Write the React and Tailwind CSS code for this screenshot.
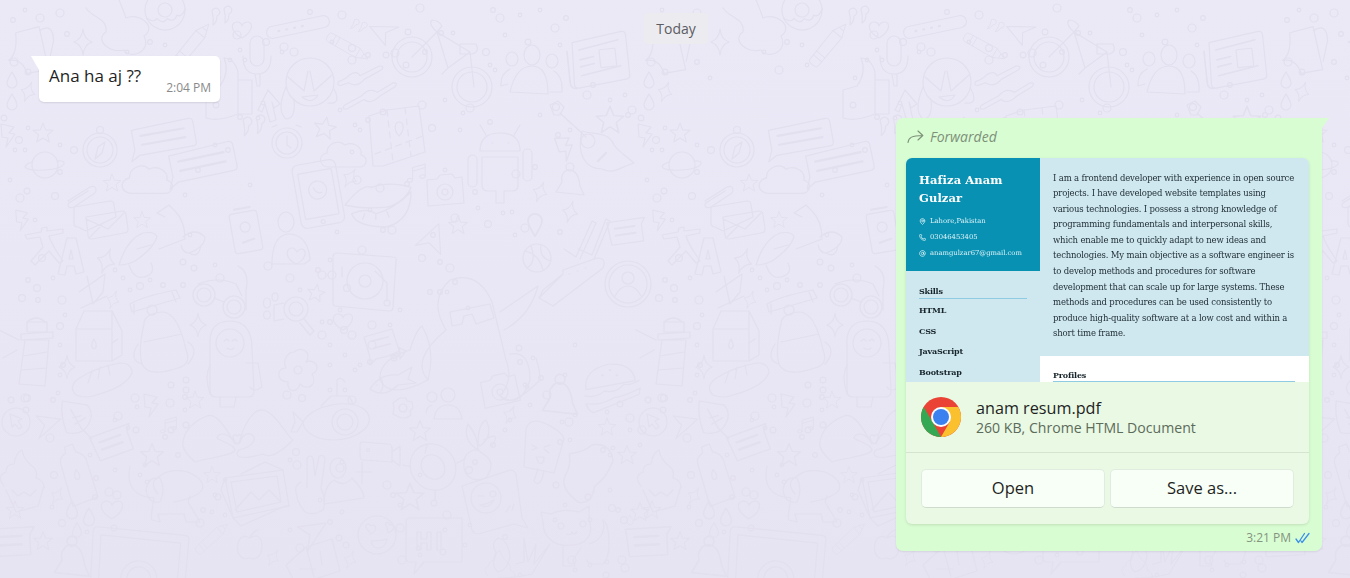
import { MapPin, Phone, AtSign } from "lucide-react";

// wallpaper doodles, local coords around 0,0
const shapes = {
  star: <path d="M0-11 3-3.5 11-3 5 2 7 10 0 5.5-7 10-5 2-11-3-3-3.5Z" />,
  spark: <path d="M0-13Q1-3 9 0 1 3 0 13-1 3-9 0-1-3 0-13Z" />,
  heart: <path d="M0 8C-13 1-11-8-5-8-2-8 0-6 0-4 0-6 3-8 6-8 11-8 12 1 0 8Z" />,
  drop: <path d="M0-8C3-3 5 0 5 3A5 5 0 0 1-5 3C-5 0-3-3 0-8Z" />,
  bolt: <path d="M-7-11 6-8 1-2 7-1-2 12 0 3-6 2Z" />,
  chat: (
    <>
      <path d="M-30-12 28-14Q32-14 32-10L32 10Q32 14 28 14L-26 14-35 19-30 8Z" />
      <path d="M-22-5H22M-22 4H22" strokeWidth="2.2" />
    </>
  ),
  note: (
    <>
      <path d="M-19-10H19L15-4V13H-17Z" />
      <path d="M-12-3H8M-12 4H8" strokeWidth="2" />
    </>
  ),
  pencil: (
    <>
      <path d="M-30-6Q-34-6-34-2V3Q-34 7-30 7H14L30 0 14-7Z" />
      <path d="M-24-6V7M-18-6V7M14-7V7M22-3V3" />
    </>
  ),
  mug: (
    <>
      <path d="M-14-20 10-22 12 22-10 22Q-12 6-26 6-16 2-14-20Z" />
      <path d="M10-18Q24-24 22-6L14 14" />
    </>
  ),
  cloud: <path d="M-14 14C-24 14-26 2-16 0-16-10-4-14 2-8 10-12 20-6 18 2 26 4 24 14 16 14Z" />,
  bigCloud: (
    <path d="M-32-18C-26-8-10-8-12 6-24 14-8 28 6 24 12 34 34 26 26 10 40 0 20-14 8-8 4-20-2-32-4-40" />
  ),
  donut: (
    <>
      <circle r="20" />
      <circle r="7" />
      <path d="M-20 3Q-14 10-10 6-6 14 0 9 6 15 10 8 14 12 20 4" />
    </>
  ),
  quote: <path d="M-8-7A4 4 0 1 1-3-2Q-3 4-7 7-6 0-8-7ZM4-9A4 4 0 1 1 9-4Q9 3 5 5 6-2 4-9Z" />,
  belt: (
    <>
      <rect x="-32" y="-6" width="64" height="12" rx="6" />
      <path d="M-20 0H-19M-12 0H-11M-4 0H-3M4 0H5" strokeWidth="2.2" />
    </>
  ),
  nav: <path d="M-15-7 15 0 0 3-3 16Z" />,
  navUp: <path d="M12-18 14 16 1 3-14 6Z" />,
  mic: (
    <>
      <rect x="-7" y="-22" width="14" height="30" rx="7" />
      <path d="M-14-2Q-14 16 0 16 14 16 14-2M-2 16 0 28H3L3 16" />
    </>
  ),
  face: (
    <>
      <circle cx="0" cy="-3" r="24" />
      <path d="M-24 2Q-34 26-24 34-14 34-16 14M24 4Q32 20 18 18M-22-8-6 6-2-14M22-10 4 6 0-14M-8 12Q2 20 8 10Z" />
    </>
  ),
  thumb: (
    <path d="M-22 26V-2L-8-6Q2-20-4-34 6-34 10-20L10-12H24V22H10Q-10 30-22 26ZM10-12V22" />
  ),
  arrowUp: <path d="M-12 6-2-14 10 0 4 4 2-2 6 16 0 18-5 0-8 8Z" />,
  sliders: (
    <>
      <path d="M-30-8Q-22-10-18-14-10-18-8-12L12-20Q18-20 14-16L-4-8Q-12 0-20-6L-28-4Q-32-4-30-8Z" />
      <path d="M-26 16-8 8Q0 0 8 6L24-2Q30-2 26 2L10 10Q0 18-6 12L-24 20Q-30 20-26 16Z" />
    </>
  ),
  bike: (
    <>
      <circle cx="-30" cy="-5" r="20" />
      <circle cx="-30" cy="-5" r="15" />
      <circle cx="30" cy="25" r="20" />
      <circle cx="30" cy="25" r="15" />
      <path d="M-30-5-5-30 28-10 32 25M-5-30Q-14-38-10-42-4-42 0-36L-5-30ZM-5-30 6 6 28-10M6 6 0 12M18-18H34Q38-10 30-8H18Z" />
    </>
  ),
  people: (
    <>
      <ellipse cx="0" cy="-17" rx="8" ry="10" />
      <path d="M-22 20Q-16-6 0-6 16-6 16 22Z" />
      <ellipse cx="-20" cy="-13" rx="6" ry="7" />
      <ellipse cx="20" cy="-11" rx="6" ry="7" />
      <path d="M-22-3Q-32 2-31 14L-24 12M22-1Q31 4 30 20L18 20" />
    </>
  ),
  paper: (
    <>
      <path d="M-24-20 26-26Q30-26 30-22L30 18Q30 22 26 22L-22 26Q-26 26-26 22Z" />
      <path d="M-30-12V20Q-30 26-24 26M-18-12 22-18M-18 14 22 8M-18-2-4-4M-18 5-4 3" strokeWidth="1.6" />
      <rect x="2" y="-10" width="16" height="18" rx="1" />
    </>
  ),
  map: (
    <>
      <path d="M-26-16-8-22 24-26 30 20-12 34-22 34Z" />
      <path d="M-8-22-2 30M10-24 16 24M-20 22 28 4" strokeDasharray="6 5" />
      <path d="M4 4C-2-2 0-10 4-10 9-10 10-2 4 4Z" />
    </>
  ),
  clock: (
    <>
      <circle r="15" />
      <circle r="11" />
      <path d="M0-7V2L4 5M-15-16-10-18M14-16 9-18" />
    </>
  ),
  compass: (
    <>
      <circle r="17" />
      <circle r="13" />
      <circle cy="-20" r="3.5" />
      <path d="M5-8 2 3-5 9-2-3Z" />
    </>
  ),
  planet: (
    <>
      <circle r="13" />
      <path d="M-13-3Q-22 0-19 3-14 6 0 5 16 4 19-1 20-5 12-4" />
    </>
  ),
  clip: <path d="M-14 8 8-6Q14-8 14-3 14 0 10 2L-8 14Q-14 16-14 12-14 10-10 8L6-2" />,
  phone: (
    <>
      <rect x="-22" y="-30" width="44" height="64" rx="6" />
      <rect x="-17" y="-21" width="34" height="46" rx="1" />
      <circle cy="-2" r="9" />
      <circle cy="30" r="2" />
      <path d="M-4-5Q-2 2 4 1" />
    </>
  ),
  android: (
    <>
      <path d="M-20-4Q-20-22 0-22 20-22 20-4Z" />
      <path d="M-14-20-20-30M14-20 20-30M-8-12H-7M8-12H9" />
      <path d="M-18 2H18V30Q18 36 12 36H4V48H-4V36H-12Q-18 36-18 30Z" />
      <rect x="-32" y="0" width="9" height="32" rx="4.5" />
      <rect x="23" y="-6" width="9" height="32" rx="4.5" />
    </>
  ),
  guitar: (
    <>
      <path d="M-40-40-32-44-26-38-30-30-36-30ZM-30-32-4-8" />
      <path d="M-8-14C4-10 18-14 24 0 30 8 40 14 44 18 30 22 24 30 12 24-4 24-14 10-8-14Z" />
      <circle cx="-2" cy="-4" r="7" />
      <path d="M8 16 16 8" strokeWidth="2.4" />
    </>
  ),
  bell: (
    <>
      <path d="M-3-12Q8-14 10 4L14 13-14 10-8 0Q-10-8-3-12Z" />
      <circle cy="-15" r="4" />
    </>
  ),
  camera: (
    <>
      <path d="M-18-12-8-13-5-17 7-18 10-14 17-15 19 11-17 14Z" />
      <circle cy="0" r="8" />
      <circle cy="0" r="3" />
    </>
  ),
  music: <path d="M-6 8V-6L8-10V4M-6 8A3 2 0 1 1-12 8 3 2 0 1 1-6 8ZM8 4A3 2 0 1 1 2 4 3 2 0 1 1 8 4ZM-6-2 8-6" />,
  lips: (
    <>
      <path d="M-30 0Q-14-20-6-16 10-22 30-16 24-2 8 2-14 4-30 0Z" />
      <path d="M-24 8Q-10 2-2 8 14 4 30-12 30 14 8 20-20 20-24 8ZM-12 8-14 13M-2 8-2 13M8 6 10 11" />
    </>
  ),
  turntable: (
    <>
      <path d="M-28-28 28-24Q32-24 31-20L28 26Q28 30 24 30L-30 25Q-32 25-32 21L-32-24Q-32-28-28-28Z" />
      <circle cx="0" cy="0" r="18" />
      <circle cx="0" cy="0" r="6" />
      <path d="M10-10 22 2V20M-23-14V-4" />
      <circle cx="22" cy="22" r="3" />
    </>
  ),
  check: <path d="M-16 14-4 22 12-14 16-12 0 24M-2 14 12 20 26-16 30-14 14 24" />,
  card: (
    <>
      <path d="M-16-8 18-12 20 14-14 20Z" />
      <path d="M-10 0 8-3M-9 8 10 5" strokeWidth="2" />
    </>
  ),
  translate: (
    <path d="M-20-8-4-11-3-15 2-16 2-12 18-14 18-10 4-7Q6 0 14 12L18 18 14 20 4 8-10 22-14 18-2 4Q-4-2-5-6L-18-4Z" />
  ),
  letterA: <path d="M-12 18-3-18H6L14 16 6 18 4 10H-3L-5 19ZM-1 3H3L1-6Z" />,
  bluetooth: <path d="M-14 2 12-16 10 2 0 14-6-14M14 6-12 18" />,
  envelope: (
    <>
      <path d="M-26-18 10-24Q14-24 14-20L16-8-14 6-22 2Q-26 2-26-2Z" />
      <path d="M-14-8 22-14Q26-14 26-10L28 4Q28 8 24 8L-8 14Q-12 14-12 10ZM-14-6 8 4 24-12M-10 12 2 0" />
    </>
  ),
  scooter: (
    <>
      <path d="M-36 20Q-28-6-12-12 0-14 2-8-2 4-20 16-28 20-36 20Z" />
      <path d="M-18 4-4 0M-26 20Q-20 38-6 30 0 26-4 18" />
      <path d="M4 4 30-6Q30-24 20-34L14-40 2-32 10-28M28-8Q40-18 50-8 50 2 34 8 28 8 26 0M34 8Q44 14 46 0" />
    </>
  ),
  passport: (
    <>
      <rect x="-14" y="-20" width="28" height="40" rx="3" />
      <path d="M-8-24 8-24M-5 10 7 8" strokeWidth="2" />
      <circle cy="-5" r="5" />
    </>
  ),
  personHeart: (
    <>
      <ellipse cx="-6" cy="-28" rx="8" ry="10" />
      <path d="M-20 14Q-20-14-4-16 16-16 18 10L12 14Z" />
      <path d="M4 14C-8 8-6-2 0-2 3-2 4 0 5 2 8-2 12-2 13 2 14 6 10 12 4 14Z" />
    </>
  ),
  glasses: (
    <>
      <circle cx="-18" cy="5" r="11" />
      <circle cx="-18" cy="5" r="7" />
      <circle cx="12" cy="17" r="11" />
      <circle cx="12" cy="17" r="7" />
      <path d="M-24-6Q-4-14 14-6L20 6M-8 8 2 12M16-24Q28-18 24 0L24 20" />
    </>
  ),
  magnify: (
    <>
      <circle cx="4" cy="-4" r="12" />
      <circle cx="4" cy="-4" r="7" />
      <path d="M12 6 22 18 18 22 8 10" />
      <ellipse cx="-25" cy="-10" rx="3.5" ry="5" />
      <ellipse cx="-17" cy="-16" rx="3" ry="4" />
      <ellipse cx="-25" cy="2" rx="3.5" ry="4" />
      <path d="M-8-10-18-8V8L-8 6" />
    </>
  ),
  backpack: (
    <>
      <path d="M-28-16-26-8 22-22 18-30Q-14-24-28-16Z" />
      <path d="M-24-16V-6M14-28 18-18" />
      <circle cx="-6" cy="-10" r="5" />
      <path d="M-14 4Q-14-6 4-8 20-8 28 30 34 44 20 48-10 58-16 44-20 30-14 4ZM-14 22 24 14M-20 24Q-30 40-16 44M30 22Q42 30 30 44" />
    </>
  ),
  astro: (
    <>
      <path d="M-20-8Q-22-34 0-34 22-34 22-6L24 36Q24 42 18 42H-14Q-20 42-20 36Z" />
      <circle cy="-12" r="14" />
      <path d="M-6-14-3-16-1-14M2-14 5-16 7-14M-3-7Q1-4 4-7M16 8H28L32 32Q24 38 20 32M-20 10Q-26 22-20 38M-10 42V52H4L6 42" />
    </>
  ),
  flower: (
    <>
      <path d="M-4-18C4-24 14-18 8-8 18-12 24 0 14 4 20 14 10 22 2 14 0 24-12 22-10 12-22 12-22-2-12-2-16-10-10-18-4-18Z" />
      <circle cy="0" r="4" />
    </>
  ),
  lighthouse: (
    <>
      <path d="M-8-28H12V-18H-8ZM-14-16 18-18V-12L-14-10ZM-10-10-16 34 10 36 14-10ZM-12 6 12 2M-14 20 12 18" />
      <path d="M-8-28Q2-36 10-28" />
      <path d="M-16-10-36-20-24-14M-18 0-32 8" />
    </>
  ),
  milk: (
    <>
      <path d="M-22-12V20H14L24 14V-10L14-30-14-30-22-12ZM-22-12H14V20M14-12 14-30" />
      <path d="M-4-2C-2 2 0 6-4 8-8 6-6 2-4-2ZM14 2 20-2" />
    </>
  ),
  bread: (
    <path d="M-26 14Q-34 6-24-2 -6-14 18-18 30-18 30-8 24 6-6 14-16 18-26 14ZM-14 2-10-10M-4-2-2-14M8-6 6-16" />
  ),
  leaf: <path d="M-14-20 10-16Q16-8 12 0 6 14-10 10-16-6-14-20ZM-6-12 4 6 14 16M-4-4 4-6M-2 2 8-4" />,
  circleCursor: (
    <>
      <circle r="14" />
      <path d="M-6-8 6-3 2-1 6 5 3 7-1 2-4 5Z" />
    </>
  ),
  hands: (
    <>
      <path d="M-2 6C-10-8-20-26-30-22-40-18-52-10-54 4-56 12-46 20-42 24-30 20-4 18-2 12-2 6-20 2-20 0-18-6-8-6-2 6Z" />
      <path d="M2 6C6-12 16-30 26-28 38-26 50-2 56 2 46 12 34 22 26 16-2 24-2 16 2 12 18 8 20 0 14-4 8-6 4 0 2 6Z" />
      <path d="M0 6C-6 0-4-4-1-3L0-2C2-4 6-4 5 0 4 3 2 5 0 6Z" />
    </>
  ),
  sub: (
    <>
      <path d="M-34 4C-24-14 14-20 28-8 42 6 20 22-4 22-20 22-34 14-34 4Z" />
      <circle cx="8" cy="4" r="13" />
      <circle cx="8" cy="4" r="8" />
      <path d="M-16-12-6-22H12L16-14M0-22V-38Q4-42 8-36M-34 4-44 -6-42 4-46 14-40 14Z" />
    </>
  ),
  gear: (
    <>
      <path d="M-3-10H3L4-7 9-6 10 0 7 3 8 7 3 10-2 10-6 8-10 6-9 0-10-5-6-8Z" />
      <circle r="4" />
    </>
  ),
  twoPersons: (
    <>
      <circle cx="-8" cy="-8" r="5" />
      <circle cx="8" cy="-10" r="7" />
      <path d="M-14 8Q-14 2-8 0M-6 14Q-4 0 8 0 20 0 22 14Z" />
    </>
  ),
  chatForward: (
    <>
      <path d="M-18-8 10-16 18 8-6 14-12 20-12 12Z" />
      <path d="M-10-4 6-8M-8 3 8-1" strokeWidth="1.8" />
      <path d="M8 10 18 6 16 2 24 6 18 14V10L12 14Z" />
    </>
  ),
  fish: (
    <path d="M-20 8Q-10-8 8-6L22-14 18-2 26 2 8 4Q-6 18-20 8ZM-10-4Q-4 4-10 12M-14 4H-13" />
  ),
  octopus: (
    <>
      <path d="M-42 60Q-60 40-24 10-42-20-20-40 8-50 22-18L36 40Q44 60 30 76M30-8 68-34Q60-4 34 10" />
      <path d="M-20-8 20-16 24-2 6 4 2-6-6-4-8 4-18 6ZM-42 60Q-80 80-90 60-92 40-60 30-54 10-48 6-34 30-42 60ZM40 34Q60 30 60 60 50 90 30 76 40 90 70 60 70 50 66 38" />
    </>
  ),
  ball: (
    <>
      <circle r="14" />
      <path d="M-12-7Q2-4 6 12M-6-12Q0 4-10 10M4-13Q2 0 14 3" />
    </>
  ),
  sneaker: (
    <path d="M-34 20-10-4-10-8 24-20Q34-20 30-10L-20 28-34 20ZM-34 20-30 12-10-4M-4-4H-3M4-7H5M12-10H13" />
  ),
  ring: (
    <>
      <circle r="23" />
      <circle r="19" />
      <circle cy="-6" r="6" />
      <path d="M-13 12Q-8 2 0 2 8 2 13 12" />
    </>
  ),
  video: (
    <>
      <path d="M-18-10 8-8Q12-8 12-4L12 10-16 8Q-20 8-20 4L-20-6Q-20-10-18-10ZM12 0 20-6V14L12 8" />
      <circle cx="-12" cy="-2" r="1.5" />
    </>
  ),
  turtle: (
    <>
      <ellipse rx="22" ry="24" transform="rotate(-40)" />
      <ellipse rx="11" ry="13" transform="rotate(-40)" />
      <path d="M-6-22-8-14M2 24V34M-22 0-30-2M24-4 32-8" />
    </>
  ),
  peace: (
    <path d="M-8 6-8-24Q-4-28-2-24L0-6 4-26Q10-28 10-22L6 6Q12 20 8 28-2 34-10 30-18 20-18 14-22 4-14 0-8 6Z" />
  ),
  personPlus: (
    <>
      <ellipse cx="-20" cy="-12" rx="8" ry="10" />
      <path d="M-34 24Q-34 6-24 0-14 8-6-2 6 10 6 18ZM-2-8H14M4-18V4" />
    </>
  ),
  cupcake: (
    <>
      <path d="M-18 8Q-26-2-16-6-16-14-8-14-6-26 0-28 2-18 10-12 16-8 14 0 22 2 22 10 16 12Z" />
      <path d="M-16 12-6 34 16 28 22 8M-10 12-4 18 2 14 8 18 14 12" />
    </>
  ),
  bottle: (
    <>
      <path d="M-6-18-6-24 2-26 4-18Q14-14 14-6L20 30-6 36-12-6Q-14-14-6-18Z" />
      <path d="M2 0C5 4 6 8 3 10-1 10-1 4 2 0Z" />
    </>
  ),
  dog: (
    <>
      <path d="M-30-24Q-36 6-6 8-10 30-8 30L0 32-2 24H24L26 32H40L28 12 30 6" />
      <path d="M-2 4Q-12-8 0-14 10-22 28-18 46-10 42 0 36 8 14 12M0-12Q-12-14-14 0-12 14 0 12 6 0 0-12Z" />
    </>
  ),
  photo: (
    <>
      <path d="M-30-14 28-22 34 14-22 26Z" />
      <path d="M-24-10 22-16 26 10-18 20ZM-20 18-4 0 4 8 14-2 26 10" />
      <path d="M-30-14-34-2-22 26-14 34 30 14 34 14M-14-18 10-30 28-22" />
    </>
  ),
  tablet: (
    <>
      <path d="M-44-26 44-22Q48-22 48-18L46 40H-48L-48-20Q-48-26-44-26Z" />
      <path d="M-40-18 40-14 38 40M-40-18-40 40" />
      <circle cy="24" r="18" />
      <circle cy="24" r="12" />
    </>
  ),
  apple: <path d="M0-8C-10-14-14-2-12 6-8 16-2 12 0 12 4 14 12 12 12 0 12-10 6-12 0-8ZM0-8Q2-14 8-16" />,
  emoji: (
    <>
      <circle r="19" />
      <path d="M-10-6C-14-10-8-13-6-9-2-12 2-6-6-1ZM10-8C6-12 11-15 13-10 17-12 20-6 11-2ZM-6 6Q4 6 10 4 8 14 0 13-5 12-6 6Z" />
    </>
  ),
  hi: (
    <>
      <path d="M-20-22H32V22H-6L-16 34-14 22H-20Q-24 22-24 18V-18Q-24-22-20-22Z" />
      <path d="M-13-8V10H-9V3H-3V10H1V-8H-3V-1H-9V-8ZM7-8V10H11V-8Z" />
    </>
  ),
  book: <path d="M-24 10-4-8 22-16 30 16-14 30ZM-4-8 4 22M-10 14H6M10-4 12 10" />,
  burger: (
    <>
      <path d="M-26-2Q-26-22 0-24 24-22 24-4Z" />
      <path d="M-8-14H-7M0-18H1M6-12H7" strokeWidth="1.8" />
      <path d="M-28 4Q-18 8-8 2 4 6 12-2 20 0 28-4M-28 12Q-14 16 0 10 12 10 28 4L26 10-22 22-26 18Z" />
    </>
  ),
  popsicle: (
    <>
      <path d="M-14-24Q-10-36 4-30 22-22 24-14L14 20-16 14Z" />
      <path d="M-2 16-6 28Q-2 34 2 26L4 18M-8-8-3-5-8-3M4-6 10-8M4-4 9 0M-4 4H4Q4 12-1 10Z" />
    </>
  ),
  splat: <path d="M-18-14Q-4-16 2-22 18-24 20-8 14 8 4 14 2 30-10 28-26 16-22 6Q-16-4-18-14Z" />,
  wink: (
    <>
      <path d="M-28-14 20-30Q24-30 26-26L32 18 38 28 24 24-12 34Q-16 34-18 30Z" />
      <circle cx="-4" cy="-2" r="15" />
      <path d="M-12-4H-6M0-6A3 3 0 1 1 6-6 3 3 0 1 1 0-6ZM-10 5Q-2 4 4 0-2 10-10 5ZM16 12 20 6M22 10 24 4" />
    </>
  ),
  cat: (
    <>
      <path d="M-32-8-34-18-24-16Q-12-22 4-18L14-24 14-10Q20 8 4 14-16 18-24 10-32 4-32-8Z" />
      <circle cx="-14" cy="-4" r="3" />
      <circle cx="8" cy="-6" r="3" />
      <path d="M-8 4Q-4 6-3 2-2 6 2 2M14 14Q32 8 28-10 34-6 34 14 34 28 28 34H14L12 30M-12 16-12 36H0L-2 30 6 18" />
    </>
  ),
  okHand: (
    <path d="M-24 4Q-30-4-22-10-12-8-10 8-12 22-22 24-30 18-24 4ZM-4 16 4 14 4-10 8 14 16-4 14 16 30-4 12 26Q-4 30-22 30" />
  ),
  cherry: (
    <>
      <path d="M-2 0Q-18 0-16 18-12 34 6 28 16 14 6 6 0 2-2 0Z" />
      <path d="M-2 0Q-2-14-12-26-18-10-2 0ZM-2-6Q-2-26 6-30 14-14 0-4ZM4-10Q22-20 12-4" />
    </>
  ),
};

const doodles = [
  ["mug", 33, 50, -10], ["spark", 83, 42, 0], ["bigCloud", 118, 26, 0], ["donut", 165, 10, -15],
  ["quote", 220, 18, 0], ["heart", 242, 30, 0], ["pencil", 193, 43, -50, 0.82], ["belt", 298, 27, -12],
  ["quote", 357, 27, 30, 0.7], ["nav", 385, 30, -12, 0.95], ["pencil", 349, 48, 30, 0.72], ["mic", 257, 58, 0, 1],
  ["face", 310, 85, 0, 1], ["thumb", 228, 92, 0, 1], ["arrowUp", 270, 104, 0, 1], ["sliders", 369, 87, -5, 1],
  ["bike", 442, 62, 0, 1], ["people", 532, 72, 0, 1], ["paper", 598, 60, -6, 1], ["map", 395, 132, 0, 1],
  ["quote", 252, 128, 0, 1.1], ["clock", 287, 143, 0, 1], ["star", 325, 128, 10, 1], ["compass", 100, 150, 0, 1],
  ["chat", 163, 137, -10, 1], ["chat", 202, 162, -12, 1.05], ["planet", 45, 165, 0, 1], ["star", 43, 133, 0, 0.9],
  ["bolt", 8, 135, 0, 1], ["cloud", 147, 178, 0, 1.1], ["cloud", 343, 153, 0, 1], ["star", 112, 183, 0, 0.8],
  ["spark", 350, 178, 30, 0.8], ["phone", 318, 192, -10, 1], ["clip", 82, 193, 0, 1], ["drop", 12, 80, 0, 1],
  ["drop", 12, 102, 0, 1], ["spark", 28, 92, 20, 0.8], ["guitar", 590, 145, 0, 1], ["star", 610, 120, 0, 1.25],
  ["bolt", 565, 148, -15, 1.1], ["android", 500, 155, 0, 1], ["bell", 570, 182, 0, 1], ["spark", 540, 192, 20, 0.8],
  ["spark", 570, 212, 15, 0.85], ["star", 458, 225, 0, 0.85], ["camera", 445, 192, 0, 1], ["music", 418, 173, 0, 0.9],
  ["lips", 378, 205, 0, 1.1], ["turntable", 365, 281, 0, 1], ["navUp", 428, 240, 0, 0.9], ["drop", 535, 225, 180, 1.4],
  ["check", 580, 235, 0, 1], ["note", 627, 230, -8, 1], ["bolt", 22, 220, 0, 0.9], ["translate", 45, 243, 0, 1],
  ["letterA", 70, 256, 0, 1], ["spark", 106, 261, 20, 1], ["bluetooth", 93, 290, 0, 1], ["spark", 113, 300, 20, 0.7],
  ["envelope", 100, 225, 0, 1], ["star", 142, 220, 0, 0.75], ["scooter", 155, 245, 0, 1], ["passport", 246, 232, -10, 1],
  ["personHeart", 292, 250, 0, 1], ["glasses", 222, 290, 0, 1], ["magnify", 292, 313, 0, 1], ["star", 316, 293, 10, 0.8],
  ["heart", 343, 322, 0, 1], ["backpack", 158, 320, 0, 1], ["spark", 198, 325, 0, 0.9], ["astro", 230, 355, 0, 1],
  ["flower", 298, 370, 0, 1], ["lighthouse", 35, 350, 0, 1], ["milk", 98, 341, 0, 1], ["spark", 67, 367, 0, 0.9],
  ["bread", 102, 381, 0, 1], ["bolt", 151, 405, 0, 1], ["star", 195, 400, 0, 0.8], ["leaf", 77, 422, 0, 1.05],
  ["nav", 47, 427, 125, 0.95], ["circleCursor", 16, 422, 0, 1], ["note", 113, 441, -20, 1.1], ["music", 170, 425, 0, 0.8],
  ["hands", 237, 438, 0, 1], ["sub", 337, 418, 0, 1], ["gear", 403, 408, 0, 1], ["twoPersons", 440, 405, 0, 1],
  ["star", 420, 431, 0, 0.95], ["chatForward", 382, 345, 0, 1], ["fish", 390, 381, 0, 1], ["octopus", 470, 320, 0, 1],
  ["ball", 537, 258, 0, 1], ["sneaker", 573, 278, 0, 1], ["ring", 628, 284, 0, 1], ["video", 380, 452, 0, 1],
  ["turtle", 433, 467, 0, 1], ["peace", 315, 482, 0, 1], ["personPlus", 358, 480, 0, 1], ["star", 410, 497, 0, 1.25],
  ["cupcake", 22, 478, 0, 1], ["bottle", 74, 470, -8, 1], ["star", 152, 455, 0, 1.05], ["dog", 160, 490, 0, 1],
  ["star", 212, 475, 0, 0.75], ["photo", 255, 492, 0, 1], ["spark", 57, 496, 30, 0.7], ["drop", 72, 510, 0, 1.1],
  ["drop", 89, 517, 0, 1.1], ["drop", 77, 530, 0, 0.9], ["heart", 112, 510, 0, 1.1], ["star", 15, 510, 0, 0.8],
  ["note", 12, 540, -3, 1.2], ["star", 43, 541, 0, 0.85], ["bell", 72, 560, 0, 1.25], ["tablet", 140, 555, 3, 1],
  ["pencil", 213, 537, -42, 0.65], ["apple", 250, 546, 0, 1], ["spark", 273, 558, 30, 0.7], ["nav", 313, 536, 110, 1.1],
  ["emoji", 377, 535, 0, 1], ["hi", 430, 540, 0, 1], ["spark", 350, 560, 20, 0.7], ["book", 310, 555, 0, 1],
  ["burger", 612, 388, -8, 1], ["bell", 560, 398, 0, 1.25], ["camera", 500, 392, -8, 1], ["spark", 510, 415, 25, 0.75],
  ["cherry", 480, 450, 0, 1], ["popsicle", 540, 453, 0, 1], ["splat", 590, 470, 0, 1.15], ["wink", 490, 500, 0, 1],
  ["cat", 575, 530, 0, 1], ["okHand", 520, 548, 0, 1], ["star", 607, 427, 0, 0.8], ["star", 627, 455, 0, 0.85],
  ["star", 640, 512, 0, 0.85], ["drop", 630, 520, 0, 0.6], ["cupcake", 500, 570, 0, 0.7],
];

const dots = [
  [25,10],[13,20],[60,13],[40,18],[14,62],[67,34],[60,62],[28,72],[73,78],[150,42],[165,45],[142,70],[127,52],[170,65],
  [218,78],[240,50],[230,60],[245,60],[216,105],[237,35],[266,42],[284,47],[332,42],[342,15],[352,48],[352,60],[368,55],
  [282,52],[294,52],[310,12],[395,53],[406,65],[425,52],[408,32],[420,8],[441,33],[453,33],[386,55],[493,10],[500,18],
  [520,15],[486,52],[505,35],[528,42],[495,70],[490,65],[540,10],[555,28],[566,18],[560,45],[587,95],[593,85],[610,100],
  [628,115],[625,95],[632,110],[4,118],[28,128],[19,140],[25,150],[60,145],[74,150],[60,172],[55,196],[15,150],[27,191],
  [10,180],[185,195],[198,170],[215,145],[240,117],[258,118],[263,103],[228,150],[250,185],[355,125],[368,120],[360,130],
  [340,110],[383,112],[445,100],[470,108],[490,122],[422,105],[432,128],[460,130],[463,113],[540,115],[556,107],[558,135],
  [570,130],[535,167],[560,232],[475,192],[478,208],[488,224],[445,170],[516,174],[503,213],[512,212],[525,228],[515,235],
  [392,230],[407,184],[422,258],[433,235],[455,218],[440,262],[370,210],[380,188],[352,152],[357,180],[430,292],[440,292],
  [455,282],[447,292],[468,308],[450,268],[362,250],[383,230],[330,260],[337,232],[20,198],[42,258],[35,220],[28,280],
  [37,288],[53,278],[22,298],[38,300],[62,300],[115,270],[123,278],[140,286],[130,290],[150,280],[163,285],[183,285],
  [183,262],[215,265],[220,278],[194,268],[190,235],[268,266],[290,278],[300,290],[318,270],[332,275],[322,275],[347,288],
  [344,330],[330,322],[322,322],[340,310],[390,325],[400,310],[372,325],[372,345],[394,358],[360,365],[352,335],[345,355],
  [330,345],[322,335],[330,365],[355,370],[330,390],[352,400],[287,395],[302,398],[345,390],[370,362],[65,315],[60,326],
  [60,345],[63,365],[60,375],[25,398],[26,410],[11,400],[27,398],[58,393],[53,400],[115,420],[128,428],[118,416],[136,430],
  [135,398],[186,390],[185,397],[186,380],[170,403],[171,385],[137,407],[165,437],[178,455],[171,430],[185,410],[186,425],
  [50,438],[90,455],[96,478],[54,475],[52,507],[95,497],[62,523],[87,532],[114,528],[145,465],[115,470],[140,475],[147,482],
  [109,492],[117,495],[200,523],[203,510],[215,495],[212,512],[218,497],[225,480],[225,515],[290,460],[296,452],[297,465],
  [320,500],[340,468],[342,462],[300,548],[290,530],[330,522],[342,512],[339,538],[346,545],[400,505],[387,485],[420,475],
  [434,503],[393,495],[400,528],[420,555],[402,560],[418,548],[447,515],[445,530],[443,552],[469,470],[475,462],[493,445],
  [505,430],[510,420],[547,395],[530,405],[527,387],[525,385],[520,362],[519,348],[533,358],[541,378],[575,345],[565,375],
  [560,442],[610,455],[613,448],[570,440],[603,450],[630,430],[630,418],[575,415],[562,422],[569,422],[642,430],[620,404],
  [607,412],[640,445],[606,575],[590,565],[607,562],[622,560],[625,568],[575,570],[572,560],[520,575],[505,537],[465,545],
  [565,505],[555,520],[556,485],[588,497],[610,490],[612,508],[624,520],[618,510],[590,520],[470,525],
];

function Wallpaper() {
  return (
    <svg
      className="absolute inset-0 pointer-events-none"
      width="1350"
      height="578"
      fill="none"
      stroke="#e2dfee"
      strokeWidth="1.2"
      strokeLinecap="round"
      strokeLinejoin="round"
    >
      <g id="tile">
        {doodles.map(([name, x, y, rot, scale = 1], i) => (
          <g key={i} transform={`translate(${x} ${y}) rotate(${rot}) scale(${scale})`}>
            {shapes[name]}
          </g>
        ))}
        {dots.map(([x, y], i) => (
          <circle key={i} cx={x} cy={y} r={1.8 + ((x * 7 + y * 3) % 5) * 0.55} />
        ))}
      </g>
      <use href="#tile" x="637" />
      <use href="#tile" x="1274" />
    </svg>
  );
}

function ChromeLogo() {
  return (
    <svg width="40" height="40" viewBox="0 0 40 40" className="shrink-0">
      <circle cx="20" cy="20" r="20" fill="#ea4335" />
      <path d="M2.7 10 12.2 26 20 40C8.9 40 0 31 0 20 0 16.4 1 13 2.7 10Z" fill="#34a853" />
      <path d="M20 10H37.3C39 13 40 16.4 40 20 40 31 31 40 20 40L28.7 25Z" fill="#fbc02d" />
      <circle cx="20" cy="20" r="10" fill="#fff" />
      <circle cx="20" cy="20" r="8" fill="#3b82f0" />
    </svg>
  );
}

const about = [
  "I am a frontend developer with experience in open source",
  "projects. I have developed website templates using",
  "various technologies. I possess a strong knowledge of",
  "programming fundamentals and interpersonal skills,",
  "which enable me to quickly adapt to new ideas and",
  "technologies. My main objective as a software engineer is",
  "to develop methods and procedures for software",
  "development that can scale up for large systems. These",
  "methods and procedures can be used consistently to",
  "produce high-quality software at a low cost and within a",
  "short time frame.",
];

const contacts = [
  [MapPin, "Lahore,Pakistan"],
  [Phone, "03046453405"],
  [AtSign, "anamgulzar67@gmail.com"],
];

function ResumePreview() {
  return (
    <div className="flex h-[224px] overflow-hidden font-['DejaVu_Serif',serif] text-[#1f2c33] blur-[0.25px]">
      <div className="w-[134px] shrink-0 bg-[#cfe8f0]">
        <div className="h-[113px] bg-[#0891b2] pl-[13px] pt-[13px] text-white">
          <div className="text-[11.5px] font-bold leading-[18px] tracking-[0.1px]">
            Hafiza Anam
            <br />
            Gulzar
          </div>
          <div className="mt-[6px] flex flex-col">
            {contacts.map(([Icon, label]) => (
              <div key={label} className="flex h-[16px] items-center gap-[4px] text-[6.8px] text-[#dff3f8]">
                <Icon size={7} strokeWidth={2.5} />
                {label}
              </div>
            ))}
          </div>
        </div>
        <div className="pl-[13px] pt-[14px] text-[8px] font-bold tracking-[-0.2px] text-[#17242a]">
          <div className="w-[108px] border-b border-[#8fcbe2] pb-px leading-[12px]">Skills</div>
          <div className="mt-[5px] flex flex-col gap-[8.5px] leading-[12px]">
            <span>HTML</span>
            <span>CSS</span>
            <span>JavaScript</span>
            <span>Bootstrap</span>
          </div>
        </div>
      </div>
      <div className="flex flex-1 flex-col">
        <div className="h-[198px] bg-[#cfe8f0] pl-[13px] pt-[12.5px] text-[8.5px] leading-[15.6px] tracking-[-0.16px] whitespace-nowrap">
          {about.map((line) => (
            <div key={line}>{line}</div>
          ))}
        </div>
        <div className="flex-1 bg-white pl-[13px] pr-[14px] pt-[13px]">
          <div className="border-b border-[#8fcbe2] text-[8px] font-bold leading-[12px] tracking-[-0.2px] text-[#17242a]">
            Profiles
          </div>
        </div>
      </div>
    </div>
  );
}

export default function App() {
  return (
    <div className="relative flex h-[578px] w-[1350px] flex-col overflow-hidden bg-gradient-to-b from-[#ece9f7] to-[#e6e3f3] font-['Open_Sans',sans-serif]">
      <Wallpaper />

      <div className="relative flex justify-center pl-[2px] pt-[13px]">
        <div className="flex h-[31px] w-[64px] items-center justify-center rounded-[4px] bg-[#ebebf0] text-[14px] text-[#5c5c62]">
          Today
        </div>
      </div>

      <div className="relative ml-[39px] mt-[12px] h-[46px] w-[181px] rounded-[5px] rounded-tl-none bg-white shadow-[0_1px_2px_rgba(0,0,0,0.1)]">
        <div className="absolute left-[-8px] top-0 h-[14px] w-[8px] bg-white [clip-path:polygon(0_0,100%_0,100%_100%)]" />
        <div className="pl-[10px] pt-[8px] text-[17px] leading-[24px] text-[#1f1f1f]">Ana ha aj ??</div>
        <div className="absolute bottom-[6px] right-[9px] text-[12px] leading-[16px] text-[#8a8a8a]">2:04 PM</div>
      </div>

      <div className="relative mr-[28px] mt-[16px] h-[433px] w-[426px] self-end rounded-[7px] rounded-tr-none bg-[#d9fdd3] pl-[10px] pr-[13px] shadow-[0_1px_2px_rgba(0,0,0,0.08)]">
        <div className="absolute right-[-7px] top-0 h-[10px] w-[7px] bg-[#d9fdd3] [clip-path:polygon(0_0,100%_0,0_100%)]" />
        <div className="flex h-[36px] items-center gap-[6px] pl-[1px] text-[14px] italic text-[#7d9079]">
          <svg width="17" height="13" viewBox="0 0 17 13" fill="none" stroke="#7d9079" strokeWidth="1.1" strokeLinecap="round" strokeLinejoin="round">
            <path d="M1 12.5C1.5 7.5 5 5.5 15.5 5.5M11 1 15.8 5.5 11 10" />
          </svg>
          Forwarded
        </div>

        <div className="mt-[4px] overflow-hidden rounded-[6px] bg-[#e9f9e4] shadow-[0_1px_3px_rgba(0,0,0,0.12)]">
          <ResumePreview />
          <div className="flex h-[71px] items-center gap-[15px] border-b border-[#d5e4d1] pb-[1px] pl-[15px]">
            <ChromeLogo />
            <div>
              <div className="text-[16.2px] leading-[22px] text-[#1f1f1f]">anam resum.pdf</div>
              <div className="text-[14.1px] leading-[18px] text-[#5d6b5b]">260 KB, Chrome HTML Document</div>
            </div>
          </div>
          <div className="flex h-[71px] gap-[5px] px-[15px] pt-[16px]">
            <button className="h-[39px] flex-1 rounded-[5px] border border-[#e1ece0] border-b-[#cfdccd] bg-[#f8fff6] text-[16.5px] text-[#1f1f1f]">
              Open
            </button>
            <button className="h-[39px] flex-1 rounded-[5px] border border-[#e1ece0] border-b-[#cfdccd] bg-[#f8fff6] text-[16.5px] text-[#1f1f1f]">
              Save as...
            </button>
          </div>
        </div>

        <div className="mt-[5px] -mr-[1px] flex items-center justify-end gap-[4px] text-[12px] leading-[18px] text-[#84947f]">
          3:21 PM
          <svg width="15" height="12" viewBox="0 0 15 12" fill="none" stroke="#3b8fe8" strokeWidth="1.3" strokeLinecap="round" strokeLinejoin="round">
            <path d="M1 7 3.5 10.5 9.5 1.5M6 9 7 10.5 14 1.5" />
          </svg>
        </div>
      </div>
    </div>
  );
}
